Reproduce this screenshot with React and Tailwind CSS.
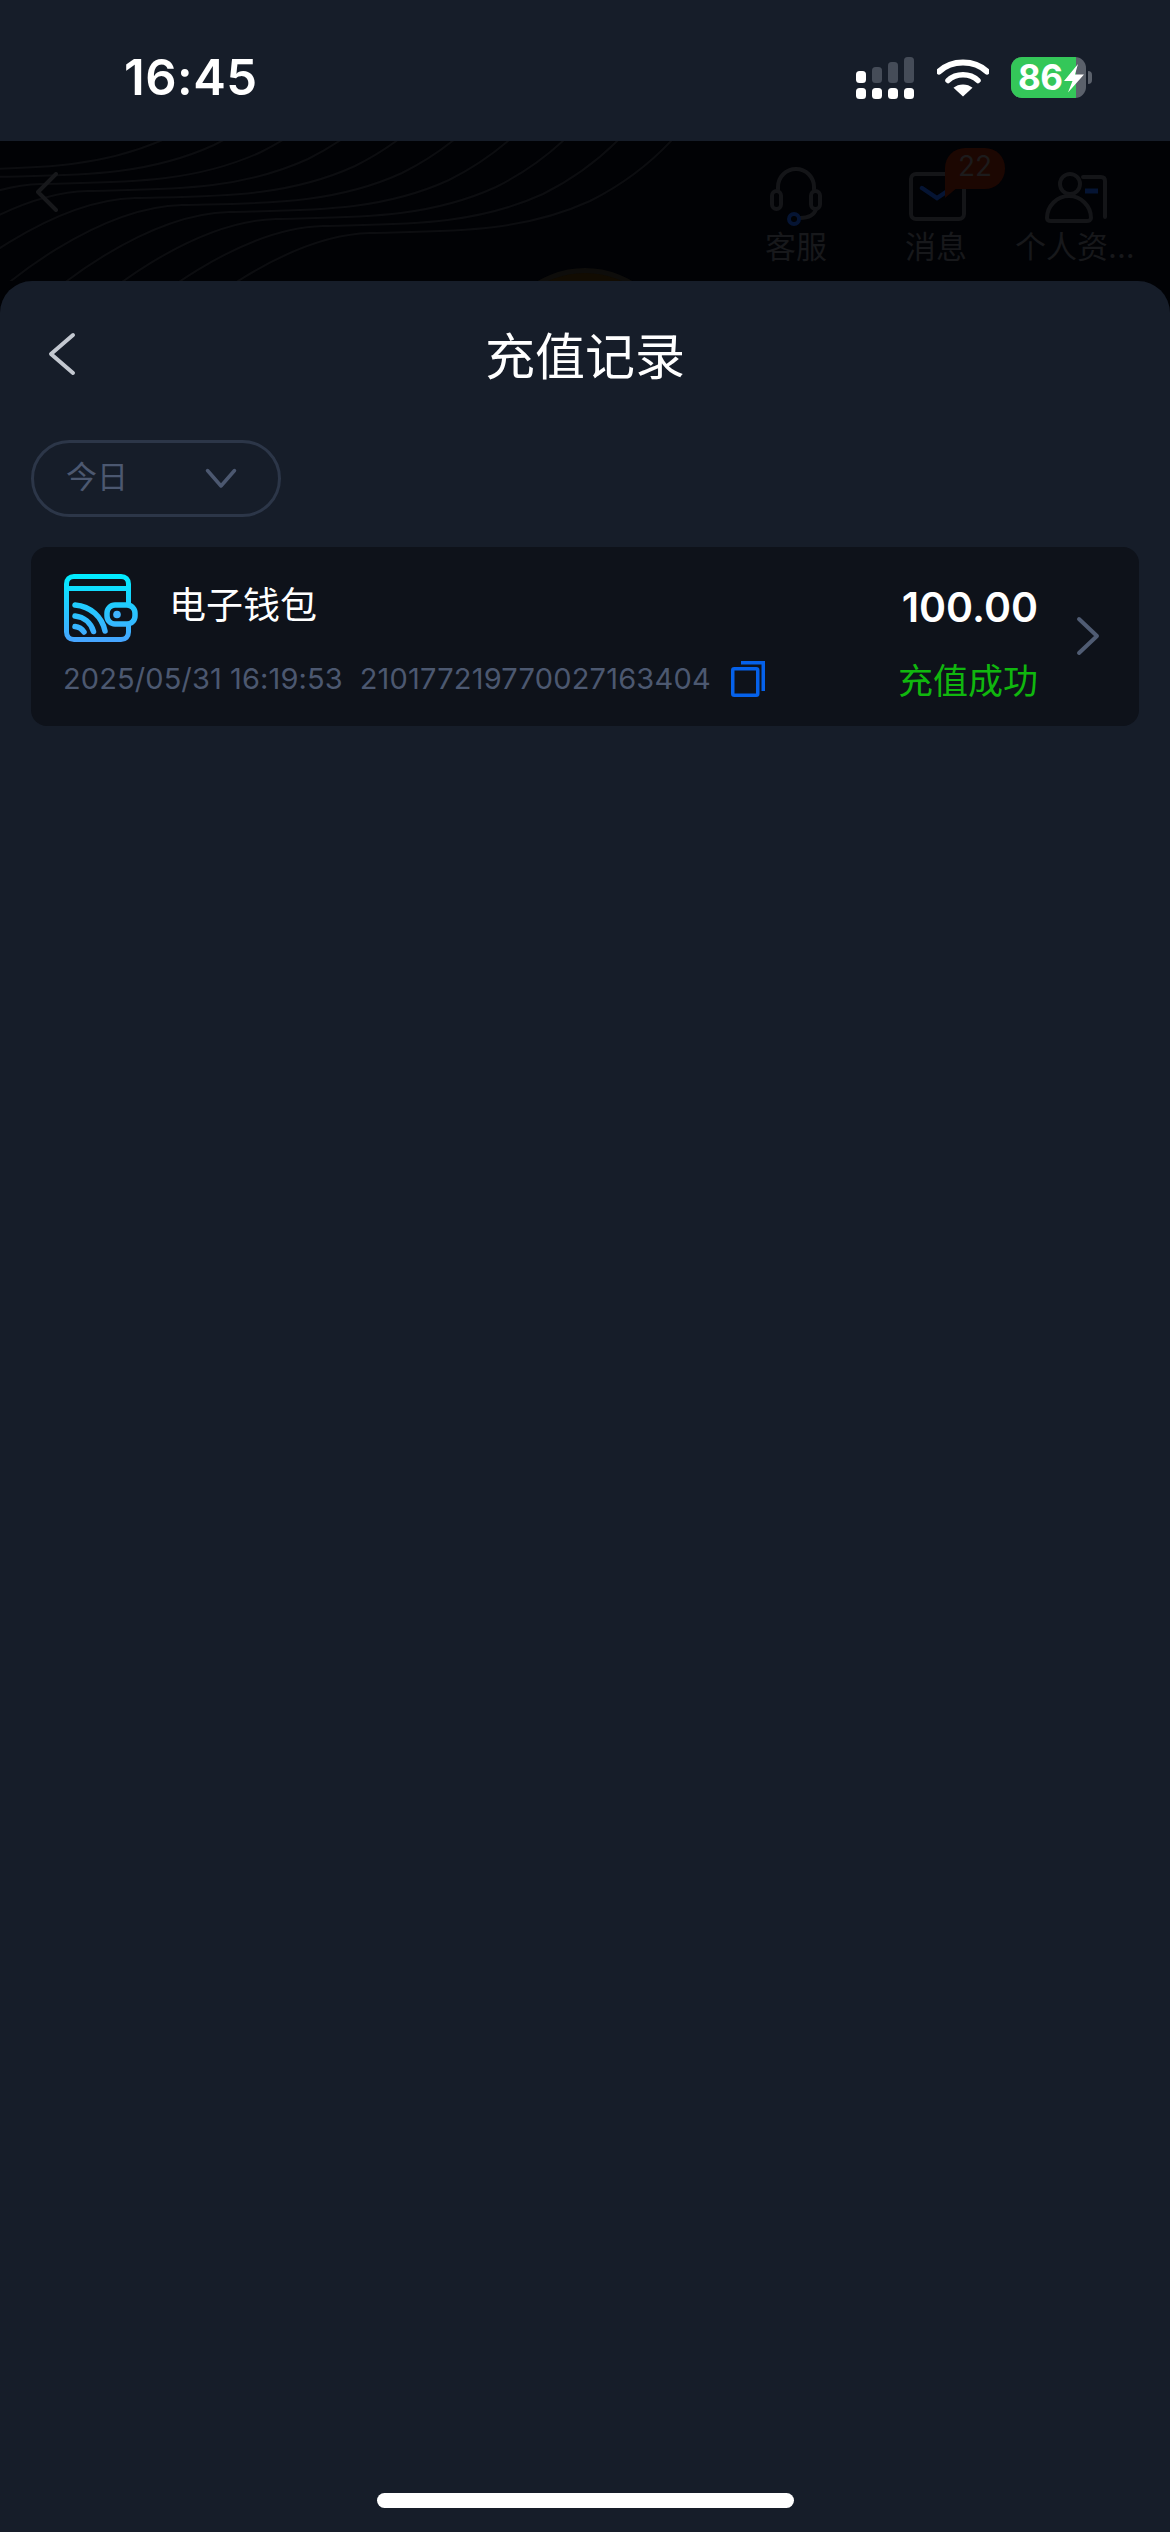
import React from 'react';

const FONT = { fontFamily: 'Inter, "Noto Sans CJK SC", sans-serif' };

function SignalIcon() {
  return (
    <svg width="60" height="42" viewBox="0 0 60 42" className="block">
      <rect x="1" y="14" width="10" height="12" rx="3.5" fill="#fff" />
      <rect x="17" y="10" width="10" height="16" rx="3.5" fill="#454c58" />
      <rect x="33" y="5" width="10" height="21" rx="3.5" fill="#454c58" />
      <rect x="49" y="0" width="10" height="26" rx="3.5" fill="#454c58" />
      <rect x="1" y="31" width="10" height="11" rx="3.5" fill="#fff" />
      <rect x="17" y="31" width="10" height="11" rx="3.5" fill="#fff" />
      <rect x="33" y="31" width="10" height="11" rx="3.5" fill="#fff" />
      <rect x="49" y="31" width="10" height="11" rx="3.5" fill="#fff" />
    </svg>
  );
}

function WifiIcon() {
  return (
    <svg width="52" height="38" viewBox="0 0 52 38" className="block">
      <path d="M2 12.5C8.5 6.5 16.8 3.5 26 3.5S43.5 6.5 50 12.5" fill="none" stroke="#fff" strokeWidth="6" strokeLinecap="round" />
      <path d="M11 21.5C15 17.8 20.2 15.8 26 15.8S37 17.8 41 21.5" fill="none" stroke="#fff" strokeWidth="5.5" strokeLinecap="round" />
      <path d="M26 37.5L16.5 28.8C19 26.7 22.3 25.5 26 25.5S33 26.7 35.5 28.8Z" fill="#fff" />
    </svg>
  );
}

function Battery() {
  return (
    <div className="flex items-center">
      <div className="relative w-[75px] h-[41px] rounded-[11px] overflow-hidden bg-[#5b616b]">
        <div className="absolute left-0 top-0 bottom-0 w-[65px] bg-[#34c759]" />
        <span className="absolute left-[7px] top-0 text-white text-[35px] leading-[41px] font-bold tracking-[-0.5px]" style={FONT}>86</span>
        <svg width="22" height="30" viewBox="0 0 22 30" className="absolute left-[52px] top-[7px]">
          <path d="M15 0L1 17H9.5L5 28.5L21 10.5H12Z" fill="#fff" />
        </svg>
      </div>
      <div className="w-[4px] h-[13px] ml-[2px] rounded-r-full bg-[#5b616b]" />
    </div>
  );
}

function StatusBar() {
  return (
    <div className="h-[141px] bg-[#161d29] flex items-start justify-between pl-[124px] pr-[78px]">
      <span className="mt-[51px] text-white text-[49px] leading-[54px] font-semibold tracking-[0.5px]" style={FONT}>16:45</span>
      <div className="mt-[57px] flex items-start gap-[22px]">
        <SignalIcon />
        <div className="mt-[2px]"><WifiIcon /></div>
        <Battery />
      </div>
    </div>
  );
}

function WaveLines() {
  const offsets = [0, 1, 2, 3, 4, 5, 6, 7, 8, 9];
  return (
    <svg className="absolute inset-0" width="1170" height="140" viewBox="0 0 1170 140">
      {offsets.map((n) => (
        <path
          key={n}
          d="M145 220C190 165 290 94 370 92C450 90 520 92 590 60C620 45 650 25 680 -10"
          transform={`translate(${-47 * n} ${-7 * n})`}
          fill="none"
          stroke="#0c0d10"
          strokeWidth="2"
        />
      ))}
    </svg>
  );
}

// dimmed page behind the sheet
function BackgroundPage() {
  return (
    <div className="relative h-[140px] bg-[#010205] overflow-hidden text-[#17181b]" style={FONT}>
      <WaveLines />
      <svg width="26" height="40" viewBox="0 0 26 40" className="absolute left-[34px] top-[31px]">
        <path d="M22 2L4 20L22 38" fill="none" stroke="#17181b" strokeWidth="4" strokeLinecap="round" strokeLinejoin="round" />
      </svg>

      <div className="absolute right-0 top-0 w-[400px] h-full">
        <svg width="52" height="60" viewBox="0 0 52 60" className="absolute left-0 top-[26px]">
          <path d="M8 26V20C8 10 16 2 26 2S44 10 44 20V26" fill="none" stroke="#141518" strokeWidth="4" />
          <rect x="2" y="24" width="9" height="18" rx="4.5" fill="none" stroke="#141518" strokeWidth="4" />
          <rect x="41" y="24" width="9" height="18" rx="4.5" fill="none" stroke="#141518" strokeWidth="4" />
          <path d="M46 42C44 49 38 51 30 51" fill="none" stroke="#141518" strokeWidth="4" />
          <circle cx="24" cy="52" r="5" fill="none" stroke="#051433" strokeWidth="4" />
        </svg>
        <span className="absolute left-[-5px] top-[87px] text-[31px] leading-[38px]">客服</span>

        <div className="absolute left-[139px] top-[31px] w-[57px] h-[49px] rounded-[7px] border-[4px] border-[#141518]" />
        <svg width="36" height="16" viewBox="0 0 36 16" className="absolute left-[149px] top-[44px]">
          <path d="M3 3L18 13L33 3" fill="none" stroke="#051433" strokeWidth="4.5" strokeLinecap="round" />
        </svg>
        <svg width="14" height="12" viewBox="0 0 14 12" className="absolute left-[175px] top-[46px]">
          <path d="M0 0V11L13 0Z" fill="#1c0702" />
        </svg>
        <div className="absolute left-[175px] top-[7px] w-[60px] h-[41px] rounded-[20px] rounded-bl-none bg-[#1c0702] text-center text-[28px] leading-[37px] text-[#1c1b1c]">22</div>
        <span className="absolute left-[135px] top-[87px] text-[31px] leading-[38px]">消息</span>

        <svg width="64" height="52" viewBox="0 0 64 52" className="absolute left-[275px] top-[31px]">
          <circle cx="25" cy="12" r="10" fill="none" stroke="#141518" strokeWidth="4" />
          <path d="M2 46C2 34 12 24 24 24S46 34 46 46C46 48 44 49 42 49H6C3 49 2 48 2 46Z" fill="none" stroke="#141518" strokeWidth="4" />
          <path d="M38 5H56C58.500 5 60 6.500 60 9V45" fill="none" stroke="#141518" strokeWidth="4" strokeLinecap="round" />
          <path d="M40 19H53" stroke="#051433" strokeWidth="5" />
        </svg>
        <span className="absolute left-[245px] top-[87px] text-[31px] leading-[38px] whitespace-nowrap">个人资...</span>
      </div>

      <div className="absolute left-[493px] top-[127px] w-[184px] h-[184px] rounded-full bg-[#120c02] border-[5px] border-[#0e0d0b]" />
    </div>
  );
}

function WalletIcon() {
  return (
    <svg width="74" height="68" viewBox="0 0 74 68" className="block shrink-0">
      <defs>
        <linearGradient id="walletGrad" gradientUnits="userSpaceOnUse" x1="0" y1="0" x2="0" y2="68">
          <stop offset="0" stopColor="#00eeff" />
          <stop offset="1" stopColor="#47a4ff" />
        </linearGradient>
      </defs>
      <g fill="none" stroke="url(#walletGrad)" strokeWidth="5">
        <path d="M64.500 30V10C64.500 5.500 61.500 2.500 57 2.500H10C5.500 2.500 2.500 5.500 2.500 10V58C2.500 62.500 5.500 65.500 10 65.500H57C61.500 65.500 64.500 62.500 64.500 58V49" />
        <path d="M3 14.500H65" />
        <rect x="43" y="31" width="28" height="19" rx="8" strokeWidth="5.500" />
        <path d="M11 31C27 32.500 38 43 41 57" strokeWidth="5.500" strokeLinecap="round" />
        <path d="M11 42C20 43 27 49 29.500 57.500" strokeWidth="5.500" strokeLinecap="round" />
        <path d="M11 52.500C15 53 18 55 20 58" strokeWidth="5.500" strokeLinecap="round" />
      </g>
      <circle cx="53" cy="40.500" r="3.800" fill="#3fb3ff" />
    </svg>
  );
}

function CopyIcon() {
  return (
    <svg width="34" height="36" viewBox="0 0 34 36" className="block shrink-0">
      <rect x="1.750" y="7.750" width="25" height="26.500" rx="1.500" fill="none" stroke="#0561ea" strokeWidth="3.500" />
      <path d="M10 1.750H32.250V30" fill="none" stroke="#0561ea" strokeWidth="3.500" />
    </svg>
  );
}

function RecordCard() {
  return (
    <div className="mt-[30px] ml-[31px] mr-[31px] h-[179px] rounded-[16px] bg-[#0e121a] flex items-start pl-[33px] pr-[39px]">
      <div className="flex-1 min-w-0 pt-[27px]">
        <div className="flex items-center gap-[31px]">
          <WalletIcon />
          <span className="text-white text-[37px] leading-[50px] -mt-[4px]">电子钱包</span>
        </div>
        <div className="-ml-px mt-[18px] flex items-center text-[#4c5870] text-[29px] leading-[38px] whitespace-nowrap">
          <span className="tracking-[0.1px]">2025/05/31 16:19:53</span>
          <span className="ml-[17px] tracking-[0.2px]">210177219770027163404</span>
          <div className="ml-[20px]"><CopyIcon /></div>
        </div>
      </div>
      <div className="flex flex-col items-end pt-[35px]">
        <span className="text-white text-[41px] leading-[50px] font-semibold">100.00</span>
        <span className="mt-[27px] text-[#10b70e] text-[35px] leading-[44px]">充值成功</span>
      </div>
      <svg width="24" height="40" viewBox="0 0 24 40" className="block ml-[38px] mt-[69px] shrink-0">
        <path d="M3 3L21 20L3 37" fill="none" stroke="#505c73" strokeWidth="4" strokeLinecap="round" strokeLinejoin="round" />
      </svg>
    </div>
  );
}

function RechargeSheet() {
  return (
    <div className="flex-1 relative rounded-t-[32px] bg-[#161d29] flex flex-col" style={FONT}>
      <div className="relative h-[129px] flex items-center justify-center">
        <svg width="30" height="44" viewBox="0 0 30 44" className="absolute left-[47px] top-[51px]">
          <path d="M26 3L4 22L26 41" fill="none" stroke="#c3c8d0" strokeWidth="4" strokeLinecap="round" strokeLinejoin="round" />
        </svg>
        <span className="text-white text-[50px] leading-[60px] mt-[22px]">充值记录</span>
      </div>
      <div className="mt-[30px] ml-[31px] w-[250px] h-[77px] rounded-full border-[3px] border-[#2c3648] flex items-center justify-between pl-[32px] pr-[41px]">
        <span className="text-[#4c5870] text-[31px] leading-[40px] -mt-[3px]">今日</span>
        <svg width="32" height="22" viewBox="0 0 32 22" className="block">
          <path d="M2.500 2.500L16 18L29.500 2.500" fill="none" stroke="#4c5870" strokeWidth="3.500" strokeLinecap="round" strokeLinejoin="round" />
        </svg>
      </div>
      <RecordCard />
      <div className="mt-auto mb-[24px] ml-[377px] w-[417px] h-[15px] rounded-full bg-white" />
    </div>
  );
}

export default function App() {
  return (
    <div className="w-[1170px] h-[2532px] overflow-hidden bg-[#010205] flex flex-col">
      <StatusBar />
      <BackgroundPage />
      <RechargeSheet />
    </div>
  );
}
